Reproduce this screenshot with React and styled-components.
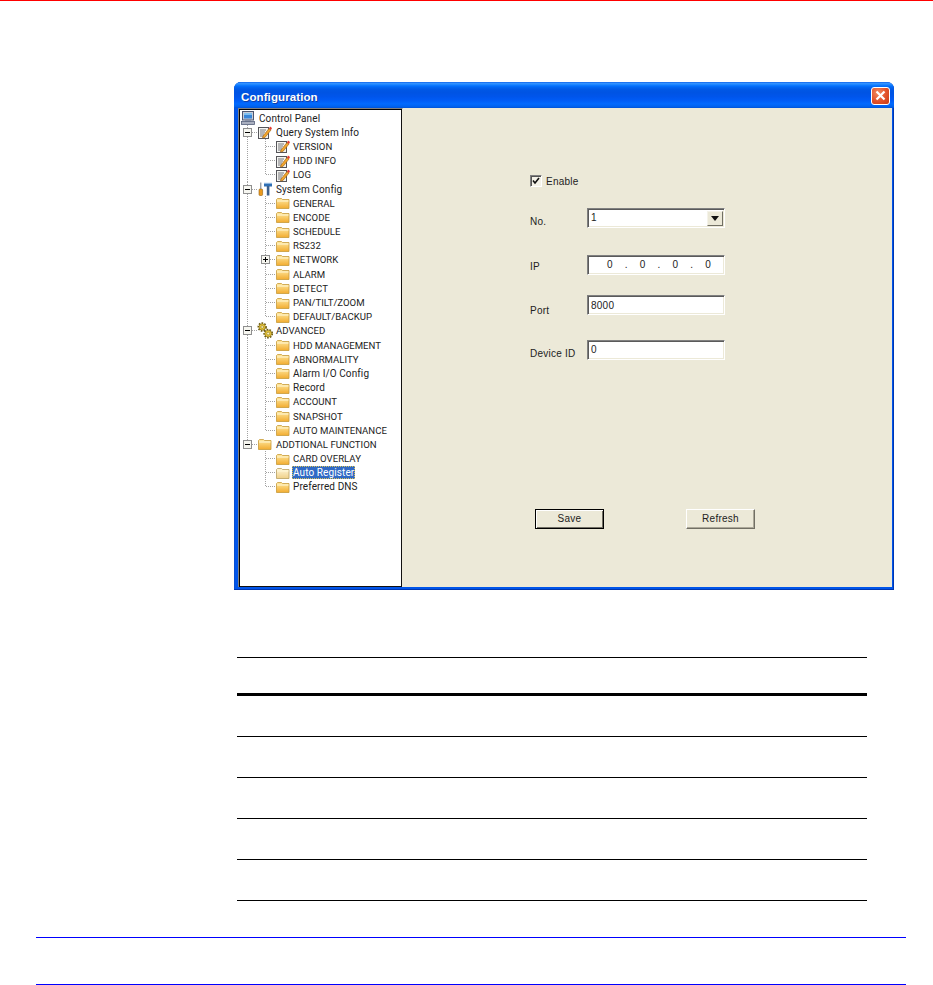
import React from "react";
import styled, { createGlobalStyle } from "styled-components";

const Global = createGlobalStyle`
  html, body { margin: 0; padding: 0; background: #fff; overflow: hidden; }
  body { font-family: "Liberation Sans", Arial, sans-serif; }
`;

const Page = styled.div`
  width: 933px;
  height: 985px;
  display: flex;
  flex-direction: column;
  overflow: hidden;
`;
const RedRule = styled.div`height: 1px; background: #ff0000;`;

const Win = styled.section`
  margin: 81px 0 0 234px;
  width: 660px;
  height: 508px;
  flex: none;
  box-sizing: border-box;
  display: flex;
  flex-direction: column;
  border-radius: 7px 7px 0 0;
  padding: 0 2px 3px 4px;
  background: #0055ea;
  box-shadow: inset -1px -1px 0 #0036b0, inset 1px 0 0 #0a4fd0;
`;
const TitleBar = styled.header`
  height: 26px;
  margin: 0 -2px 0 -4px;
  padding: 0 4px 0 7px;
  flex: none;
  display: flex;
  align-items: center;
  justify-content: space-between;
  border-radius: 7px 7px 0 0;
  background: linear-gradient(180deg,#0058e6 0,#3a93ff 4%,#288eff 8%,#127dff 12%,#036ffc 16%,#0262ee 22%,#0057e5 30%,#0054e3 40%,#0055eb 56%,#005bf5 70%,#026afe 84%,#0062ef 94%,#0052d6 100%);
`;
const Title = styled.h1`
  margin: 4px 0 0;
  color: #fff;
  font: bold 11.5px "Liberation Sans", Arial, sans-serif;
  letter-spacing: 0.1px;
  text-shadow: 1px 1px 0 #0f3fa8;
`;
const CloseBtn = styled.div`
  width: 19px;
  height: 18px;
  margin-top: 1px;
  box-sizing: border-box;
  border: 1px solid #fff;
  border-radius: 3px;
  display: flex;
  align-items: center;
  justify-content: center;
  background: radial-gradient(circle at 35% 30%, #f08a60, #e2512a 55%, #c73a12);
`;
const Body = styled.div`
  flex: 1;
  min-height: 0;
  display: flex;
  background: #ece9d8;
`;
const TreePane = styled.nav`
  width: 165px;
  flex: none;
  box-sizing: border-box;
  background: #fff;
  border-top: 1px solid #808080;
  border-left: 1px solid #808080;
  border-right: 1px solid #ece9d8;
  box-shadow: inset 1px 1px 0 #000, inset -1px -1px 0 #111;
  padding: 2px 0 0 1px;
`;
const Row = styled.div`
  height: 14.19px;
  display: flex;
  align-items: center;
  font-family: Roboto, "Liberation Sans", sans-serif;
  font-size: 10px;
  letter-spacing: 0.1px;
  color: #222;
  white-space: nowrap;
`;
const Guide = styled.svg`
  flex: none;
  width: ${p => p.$w}px;
  height: 15px;
  overflow: visible;
  shape-rendering: crispEdges;
`;
const IconBox = styled.svg`
  flex: none;
  width: 14px;
  height: 14px;
  overflow: visible;
`;
const Label = styled.span`
  margin-left: ${p => p.$gap}px;
  line-height: 13px;
  box-sizing: border-box;
  ${p => p.$caps ? "font-size: 9.6px; letter-spacing: 0;" : ""}
  ${p => p.$selected ? `
    background: #316ac5;
    color: #fff;
    padding: 0 1px;
    outline: 1px dotted #d9c35a;
    outline-offset: -1px;
    margin-left: ${p.$gap - 1}px;
  ` : ""}
`;

const FormPane = styled.div`
  flex: 1;
  display: flex;
  flex-direction: column;
  padding: 67px 0 0 127px;
`;
const Check = styled.label`
  display: flex;
  align-items: center;
  gap: 4px;
  height: 12px;
  font-size: 10px;
  letter-spacing: 0.25px;
  color: #222;
`;
const CheckBox = styled.span`
  width: 12px;
  height: 12px;
  box-sizing: border-box;
  background: #f4f2e8;
  border: 1px solid;
  border-color: #808080 #fff #fff #808080;
  box-shadow: inset 1px 1px 0 #555;
  display: flex;
  align-items: center;
  justify-content: center;
`;
const Field = styled.div`
  display: flex;
  height: 20px;
  margin-top: ${p => p.$mt}px;
`;
const FieldLabel = styled.span`
  width: 57px;
  flex: none;
  padding-top: ${p => p.$drop}px;
  font-size: 10px;
  line-height: 12px;
  letter-spacing: 0.25px;
  color: #222;
`;
const Input = styled.div`
  width: 138px;
  height: 20px;
  box-sizing: border-box;
  background: #fff;
  border: 1px solid;
  border-color: #808080 #fff #fff #808080;
  box-shadow: inset 1px 1px 0 #5a5a5a, inset -1px -1px 0 #ece9d8;
  padding: ${p => p.$top ?? 3}px 0 0 3px;
  font-size: 10px;
  line-height: 12px;
  letter-spacing: 0.25px;
  color: #222;
`;
const SelectBox = styled(Input)`
  display: flex;
  justify-content: space-between;
  padding: 3px 1px 0 3px;
`;
const Arrow = styled.span`
  width: 16px;
  height: 15px;
  margin-top: -1px;
  box-sizing: border-box;
  background: #ece9d8;
  border: 1px solid;
  border-color: #f5f3ea #716f64 #716f64 #f5f3ea;
  display: flex;
  align-items: center;
  justify-content: center;
`;
const IpBox = styled(Input)`
  display: flex;
  justify-content: space-between;
  padding: 3px 13px 0 19px;
`;
const Buttons = styled.div`
  display: flex;
  gap: 82px;
  margin: 149px 0 0 5px;
`;
const Btn = styled.button`
  width: 69px;
  height: 20px;
  padding: 0 0 1px;
  box-sizing: border-box;
  background: #ece9d8;
  font: 10px "Liberation Sans", Arial, sans-serif;
  letter-spacing: 0.25px;
  color: #222;
  border: 1px solid ${p => p.$primary ? "#000" : "#ece9d8"};
  box-shadow: inset 1px 1px 0 #fff, inset -1px -1px 0 #716f64;
  ${p => p.$primary ? "" : "border-color: #fff #716f64 #716f64 #fff; box-shadow: inset -1px -1px 0 #aca899;"}
`;

const RuleTable = styled.div`
  margin: 67px 0 0 237px;
  width: 630px;
  flex: none;
  border-top: 1px solid #000;
`;
const RuleRow = styled.div`
  height: ${p => p.$h}px;
  border-bottom: ${p => p.$b}px solid #000;
`;
const Footer = styled.div`
  margin: 36px 0 0 36px;
  width: 870px;
  height: 46px;
  flex: none;
  border-top: 1px solid #0000ff;
  border-bottom: 1px solid #0000ff;
`;

const Computer = () => (
  <IconBox viewBox="0 0 14 14">
    <rect x="1.5" y="0.5" width="11" height="8.5" fill="#c9ccd6" stroke="#4c5670" />
    <rect x="3" y="2" width="8" height="5.5" fill="#3a86d8" />
    <rect x="3" y="2" width="8" height="2" fill="#7fc0f0" />
    <rect x="4" y="9" width="6" height="1.5" fill="#8c93a6" />
    <rect x="0.5" y="10.5" width="13" height="3" fill="#aab0c0" stroke="#55607a" strokeWidth="0.8" />
  </IconBox>
);
const Note = () => (
  <IconBox viewBox="0 0 14 14">
    <rect x="0.5" y="2.5" width="10" height="11" fill="#f4f4f0" stroke="#55555a" />
    <path d="M2 5h6M2 7h5M2 9h4M2 11h6" stroke="#77777c" strokeWidth="1" />
    <path d="M5 11 L11 3.5 L13 5 L7 12.5 L4.5 13 Z" fill="#f2a62c" stroke="#9a5a10" strokeWidth="0.6" />
    <path d="M11 3.5 L12 1.5 L14 3 L13 5 Z" fill="#e23a30" />
  </IconBox>
);
const Tools = () => (
  <IconBox viewBox="0 0 14 14">
    <rect x="1" y="7" width="3.6" height="6.5" rx="1" fill="#eb9a1e" stroke="#94600f" strokeWidth="0.6" />
    <rect x="2.3" y="0.5" width="1" height="6.5" fill="#707880" />
    <path d="M6 1.5h8v3H6z" fill="#2f6fb4" />
    <rect x="8.8" y="4" width="2.6" height="9.5" fill="#3c5f8c" />
    <rect x="6" y="0.8" width="8" height="1" fill="#88b4e0" />
  </IconBox>
);
const Gear = ({ cx, cy, r }) => (
  <g>
    <circle cx={cx} cy={cy} r={r} fill="none" stroke="#6b5a10" strokeWidth="1.8" strokeDasharray="1.6 1.2" />
    <circle cx={cx} cy={cy} r={r - 0.6} fill="#e8c53a" stroke="#7b6512" strokeWidth="0.6" />
    <circle cx={cx} cy={cy} r={r * 0.35} fill="#fff6c0" stroke="#7b6512" strokeWidth="0.5" />
  </g>
);
const Gears = () => (
  <IconBox viewBox="0 0 14 14">
    <Gear cx={4.2} cy={3} r={3.8} />
    <Gear cx={10.2} cy={9.6} r={4} />
  </IconBox>
);
const Folder = ({ pale }) => (
  <IconBox viewBox="0 0 14 14">
    <defs>
      <linearGradient id="fold" x1="0" y1="0" x2="0" y2="1">
        <stop offset="0" stopColor="#ffe9a0" />
        <stop offset="1" stopColor="#f2ac30" />
      </linearGradient>
      <linearGradient id="foldp" x1="0" y1="0" x2="0" y2="1">
        <stop offset="0" stopColor="#fff6d8" />
        <stop offset="1" stopColor="#f0d088" />
      </linearGradient>
    </defs>
    <path d="M0.5 3.5 L1.5 2.5 H5.5 L6.5 3.5 H13 V12.5 H0.5 Z" fill={pale ? "url(#foldp)" : "url(#fold)"} stroke={pale ? "#b8a060" : "#c69a3a"} strokeWidth="0.8" />
    <path d="M1 5 H12.5" stroke="#fff8d8" strokeWidth="1" />
  </IconBox>
);

const icons = { computer: Computer, note: Note, tools: Tools, gears: Gears, folder: Folder };

const Connector = ({ kind, trunk, trunkEnd, last, expander, plus }) => {
  const dot = { stroke: "#a2a2a2", strokeWidth: 1, strokeDasharray: "1 1", fill: "none" };
  const w = kind === "leaf" ? 36 : kind === "branch" ? 18 : 1;
  return (
    <Guide $w={w} viewBox={`0 0 ${w} 15`}>
      {kind === "branch" && (
        <>
          <path d={`M7.5 0V${trunkEnd ? 7.5 : 15}`} {...dot} />
          <path d="M7.5 7.5H18" {...dot} />
          <rect x="3.5" y="3.5" width="8" height="8" fill="#f6f6f0" stroke="#8f8f8f" />
          <path d="M5 7.5h5" stroke="#000" />
        </>
      )}
      {kind === "leaf" && (
        <>
          {trunk && <path d="M7.5 0V15" {...dot} />}
          <path d={`M25.5 0V${last ? 7.5 : 15}`} {...dot} />
          <path d="M25.5 7.5H36" {...dot} />
          {expander && (
            <>
              <rect x="21.5" y="3.5" width="8" height="8" fill="#f6f6f0" stroke="#8f8f8f" />
              <path d="M23 7.5h5" stroke="#000" />
              {plus && <path d="M25.5 5v5" stroke="#000" />}
            </>
          )}
        </>
      )}
    </Guide>
  );
};

const leaf = (text, extra = {}) => ({ kind: "leaf", icon: "folder", text, trunk: true, ...extra });

const rows = [
  { kind: "root", icon: "computer", text: "Control Panel" },
  { kind: "branch", icon: "note", text: "Query System Info" },
  leaf("VERSION", { icon: "note" }),
  leaf("HDD INFO", { icon: "note" }),
  leaf("LOG", { icon: "note", last: true }),
  { kind: "branch", icon: "tools", text: "System Config" },
  leaf("GENERAL"),
  leaf("ENCODE"),
  leaf("SCHEDULE"),
  leaf("RS232"),
  leaf("NETWORK", { expander: true, plus: true }),
  leaf("ALARM"),
  leaf("DETECT"),
  leaf("PAN/TILT/ZOOM"),
  leaf("DEFAULT/BACKUP", { last: true }),
  { kind: "branch", icon: "gears", text: "ADVANCED" },
  leaf("HDD MANAGEMENT"),
  leaf("ABNORMALITY"),
  leaf("Alarm I/O Config"),
  leaf("Record"),
  leaf("ACCOUNT"),
  leaf("SNAPSHOT"),
  leaf("AUTO MAINTENANCE", { last: true }),
  { kind: "branch", icon: "folder", text: "ADDTIONAL FUNCTION", trunkEnd: true },
  leaf("CARD OVERLAY", { trunk: false }),
  leaf("Auto Register", { trunk: false, selected: true }),
  leaf("Preferred DNS", { trunk: false, last: true }),
];

export default function App() {
  return (
    <Page>
      <Global />
      <RedRule />
      <Win>
        <TitleBar>
          <Title>Configuration</Title>
          <CloseBtn>
            <svg width="11" height="11" viewBox="0 0 11 11">
              <path d="M1.5 1.5L9.5 9.5M9.5 1.5L1.5 9.5" stroke="#fff" strokeWidth="2.2" />
            </svg>
          </CloseBtn>
        </TitleBar>
        <Body>
          <TreePane>
            {rows.map(r => {
              const Ic = icons[r.icon];
              return (
                <Row key={r.text}>
                  <Connector {...r} />
                  <Ic pale={r.selected} />
                  <Label
                    $gap={r.kind === "leaf" ? 3 : 4}
                    $selected={r.selected}
                    $caps={r.text === r.text.toUpperCase()}
                  >
                    {r.text}
                  </Label>
                </Row>
              );
            })}
          </TreePane>
          <FormPane>
            <Check>
              <CheckBox>
                <svg width="8" height="8" viewBox="0 0 8 8">
                  <path d="M1 3.5L3 6L7 1" fill="none" stroke="#111" strokeWidth="1.6" />
                </svg>
              </CheckBox>
              Enable
            </Check>
            <Field $mt={21}>
              <FieldLabel $drop={8}>No.</FieldLabel>
              <SelectBox>
                <span>1</span>
                <Arrow>
                  <svg width="8" height="5" viewBox="0 0 8 5"><path d="M0 0H8L4 5Z" fill="#111" /></svg>
                </Arrow>
              </SelectBox>
            </Field>
            <Field $mt={27}>
              <FieldLabel $drop={6}>IP</FieldLabel>
              <IpBox>
                <span>0</span><span>.</span><span>0</span><span>.</span><span>0</span><span>.</span><span>0</span>
              </IpBox>
            </Field>
            <Field $mt={20}>
              <FieldLabel $drop={10}>Port</FieldLabel>
              <Input $top={4}>8000</Input>
            </Field>
            <Field $mt={25}>
              <FieldLabel $drop={8}>Device ID</FieldLabel>
              <Input>0</Input>
            </Field>
            <Buttons>
              <Btn $primary>Save</Btn>
              <Btn>Refresh</Btn>
            </Buttons>
          </FormPane>
        </Body>
      </Win>
      <RuleTable>
        <RuleRow $h={35} $b={3} />
        <RuleRow $h={40} $b={1} />
        <RuleRow $h={40} $b={1} />
        <RuleRow $h={40} $b={1} />
        <RuleRow $h={40} $b={1} />
        <RuleRow $h={40} $b={1} />
      </RuleTable>
      <Footer />
    </Page>
  );
}
